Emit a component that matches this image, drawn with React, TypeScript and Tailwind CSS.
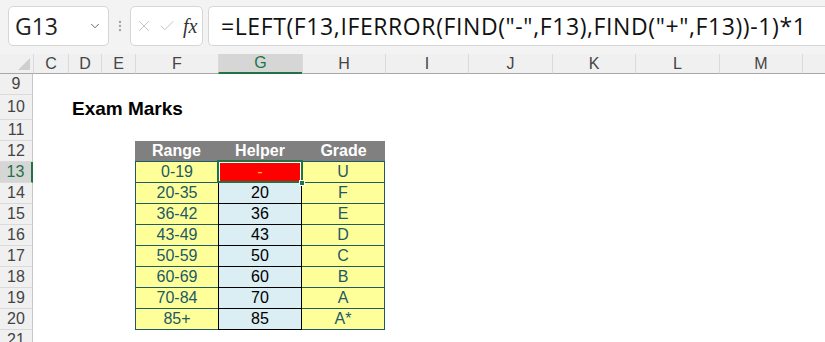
import { ChevronDown, EllipsisVertical, X, Check } from "lucide-react";

type Row = { n: number; range: string; helper: string; grade: string };

const cols = ["C", "D", "E", "F", "G", "H", "I", "J", "K", "L", "M", ""];
const grid = "grid grid-cols-[33px_35px_33px_34px_83px_84px_83px_83px_84px_83px_84px_83px_1fr]";

const data: Row[] = [
  { n: 13, range: "0-19", helper: "-", grade: "U" },
  { n: 14, range: "20-35", helper: "20", grade: "F" },
  { n: 15, range: "36-42", helper: "36", grade: "E" },
  { n: 16, range: "43-49", helper: "43", grade: "D" },
  { n: 17, range: "50-59", helper: "50", grade: "C" },
  { n: 18, range: "60-69", helper: "60", grade: "B" },
  { n: 19, range: "70-84", helper: "70", grade: "A" },
  { n: 20, range: "85+", helper: "85", grade: "A*" },
];

const RowHead = ({ n, active }: { n: number; active?: boolean }) => (
  <div
    className={
      "flex items-center justify-center border-b border-[#dadada] text-[16px] " +
      (active
        ? "bg-[#d6d6d6] text-[#217346] border-r-2 border-r-[#217346]"
        : "bg-[#f0f0f0] text-[#444] border-r border-r-[#c6c6c6]")
    }
  >
    {n}
  </div>
);

const Blank = ({ span }: { span: string }) => <div className={span} />;

export default function App() {
  return (
    <div className="h-[342px] w-[825px] overflow-hidden bg-white font-['Liberation_Sans',Arial,sans-serif] leading-none">
      {/* formula bar */}
      <div className="flex h-[54px] items-start bg-[#f3f3f3] pt-[6px]">
        <div className="ml-[8px] flex h-[40px] w-[101px] items-center justify-between rounded-[5px] border border-[#d6d6d6] bg-white pl-[6px] pr-[6px]">
          <span className="font-['Open_Sans',sans-serif] text-[23px] text-[#222]">G13</span>
          <ChevronDown size={14} strokeWidth={1.5} className="text-[#555]" />
        </div>
        <div className="flex h-[40px] w-[21px] items-center justify-center">
          <EllipsisVertical size={14} strokeWidth={2} className="text-[#a0a0a0]" />
        </div>
        <div className="flex h-[40px] w-[73px] items-center gap-[5px] rounded-[5px] border border-[#d6d6d6] bg-white pl-[4px]">
          <X size={18} strokeWidth={1.2} className="text-[#bdbdbd]" />
          <Check size={18} strokeWidth={1.2} className="text-[#bdbdbd]" />
          <span className="ml-[2px] font-['Liberation_Serif',serif] text-[20px] italic text-[#333]">fx</span>
        </div>
        <div className="ml-[5px] flex h-[40px] flex-1 items-center rounded-l-[5px] border border-r-0 border-[#d6d6d6] bg-white pl-[12px]">
          <span className="whitespace-nowrap font-['Open_Sans',sans-serif] text-[23px] tracking-[0.6px] text-[#111]">
            =LEFT(F13,IFERROR(FIND("-",F13),FIND("+",F13))-1)*1
          </span>
        </div>
      </div>

      {/* column headers */}
      <div className={grid + " h-[20px] bg-[#f0f0f0]"}>
        <div className="relative border-b border-[#a8a8a8]">
          <svg className="absolute bottom-[3px] right-[3px]" width="12" height="12" viewBox="0 0 12 12">
            <polygon points="12,0 12,12 0,12" fill="#cfcfcf" />
          </svg>
        </div>
        {cols.map((c, i) => (
          <div
            key={i}
            className={
              "flex items-center justify-center border-l border-l-[#dadada] text-[16px] " +
              (c === "G"
                ? "border-b-2 border-b-[#217346] bg-[#d6d6d6] text-[#217346]"
                : "border-b border-b-[#a8a8a8] text-[#444]")
            }
          >
            {c}
          </div>
        ))}
      </div>

      {/* rows 9-11 */}
      <div className={grid + " h-[21px]"}>
        <RowHead n={9} />
      </div>
      <div className={grid + " h-[25px]"}>
        <RowHead n={10} />
        <Blank span="" />
        <div className="col-span-3 flex items-center whitespace-nowrap pl-[4px] pt-[2px] text-[19px] font-bold text-black">
          Exam Marks
        </div>
      </div>
      <div className={grid + " h-[21px]"}>
        <RowHead n={11} />
      </div>

      {/* row 12 header */}
      <div className={grid + " h-[21px]"}>
        <RowHead n={12} />
        <Blank span="col-span-3" />
        {["Range", "Helper", "Grade"].map((t) => (
          <div
            key={t}
            className="flex items-center justify-center border-b border-[#215967] bg-[#808080] text-[16px] font-bold text-white"
          >
            {t}
          </div>
        ))}
      </div>

      {data.map((r) => (
        <div key={r.n} className={grid + " h-[21px]"}>
          <RowHead n={r.n} active={r.n === 13} />
          <Blank span="col-span-3" />
          <div className="flex items-center justify-center border-b border-l border-[#215967] bg-[#ffff99] text-[16px] text-[#215967]">
            {r.range}
          </div>
          {r.n === 13 ? (
            <div className="relative flex items-center justify-center border-x border-b border-black bg-[#ff0000] text-[16px] text-[#ffc000] shadow-[inset_0_0_0_1px_white]">
              {r.helper}
              <div className="absolute -bottom-[1px] -left-[2px] -right-[2px] -top-[2px] border-2 border-[#217346]" />
              <div className="absolute -bottom-[4px] -right-[4px] h-[6px] w-[6px] border border-white bg-[#217346]" />
            </div>
          ) : (
            <div className="flex items-center justify-center border-x border-b border-black bg-[#daeef3] text-[16px] text-black">
              {r.helper}
            </div>
          )}
          <div className="flex items-center justify-center border-b border-r border-[#215967] bg-[#ffff99] text-[16px] text-[#215967]">
            {r.grade}
          </div>
        </div>
      ))}

      <div className={grid + " h-[21px]"}>
        <RowHead n={21} />
      </div>
    </div>
  );
}
